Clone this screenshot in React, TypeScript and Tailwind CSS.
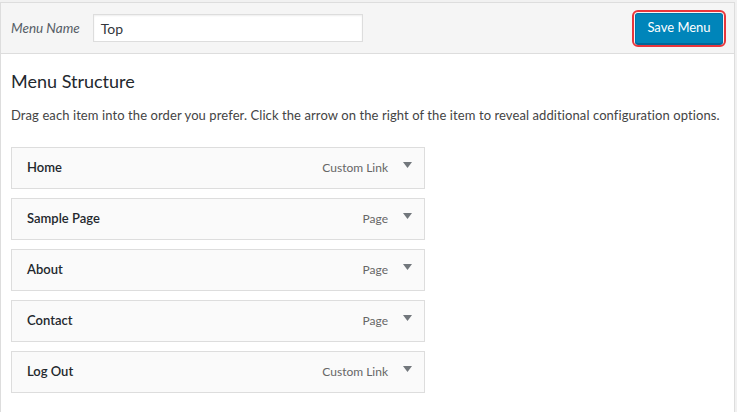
import React from "react";

const items = [
  { title: "Home", type: "Custom Link" },
  { title: "Sample Page", type: "Page" },
  { title: "About", type: "Page" },
  { title: "Contact", type: "Page" },
  { title: "Log Out", type: "Custom Link" },
];

export default function App() {
  return (
    <div
      className="min-h-screen w-full bg-[#f1f1f1] pt-[2px] text-[#23282d]"
      style={{ fontFamily: 'Lato, "Noto Sans", "Liberation Sans", sans-serif' }}
    >
      <div className="w-[735px] min-h-[420px] border border-[#dddddd] bg-white">
        <div className="flex h-[51px] items-center justify-between border-b border-[#dddddd] bg-[#f5f5f5] pl-[10px] pr-[11px]">
          <div className="flex items-center">
            <span className="text-[13.5px] italic text-[#555d66]">Menu Name</span>
            <div className="ml-[13px] flex h-[28px] w-[270px] items-center border border-[#dddddd] bg-white pl-[7px] text-[14px] text-[#32373c] shadow-[inset_0_1px_2px_rgba(0,0,0,0.07)]">
              Top
            </div>
          </div>
          <button className="flex h-[31px] w-[88px] items-center justify-center rounded-[3px] border border-[#0073aa] border-b-[#006799] bg-[#0085ba] text-[13px] text-white shadow-[0_1px_0_#006799] outline-2 outline-offset-1 outline-[#e8363c]">
            Save Menu
          </button>
        </div>
        <div className="pl-[10px]">
          <h3 className="mt-[15px] text-[18px] leading-[25px] text-[#23282d]">Menu Structure</h3>
          <p className="mt-[11px] whitespace-nowrap text-[13px] leading-[20px] tracking-[0.09px] text-[#444]">
            Drag each item into the order you prefer. Click the arrow on the right of the item to reveal additional
            configuration options.
          </p>
          <div className="mt-[22px] flex flex-col gap-[9px]">
            {items.map((it) => (
              <div
                key={it.title}
                className="flex h-[42px] w-[414px] items-center border border-[#dddddd] bg-[#fafafa] pl-[15px] pr-[12px]"
              >
                <span className="flex-1 text-[13px] font-semibold text-[#23282d]">{it.title}</span>
                <span className="text-[12px] text-[#666]">{it.type}</span>
                <svg width="9" height="6" viewBox="0 0 9 6" className="ml-[15px] -mt-[6px]">
                  <polygon points="0,0 9,0 4.5,6" fill="#72777c" />
                </svg>
              </div>
            ))}
          </div>
        </div>
      </div>
    </div>
  );
}
